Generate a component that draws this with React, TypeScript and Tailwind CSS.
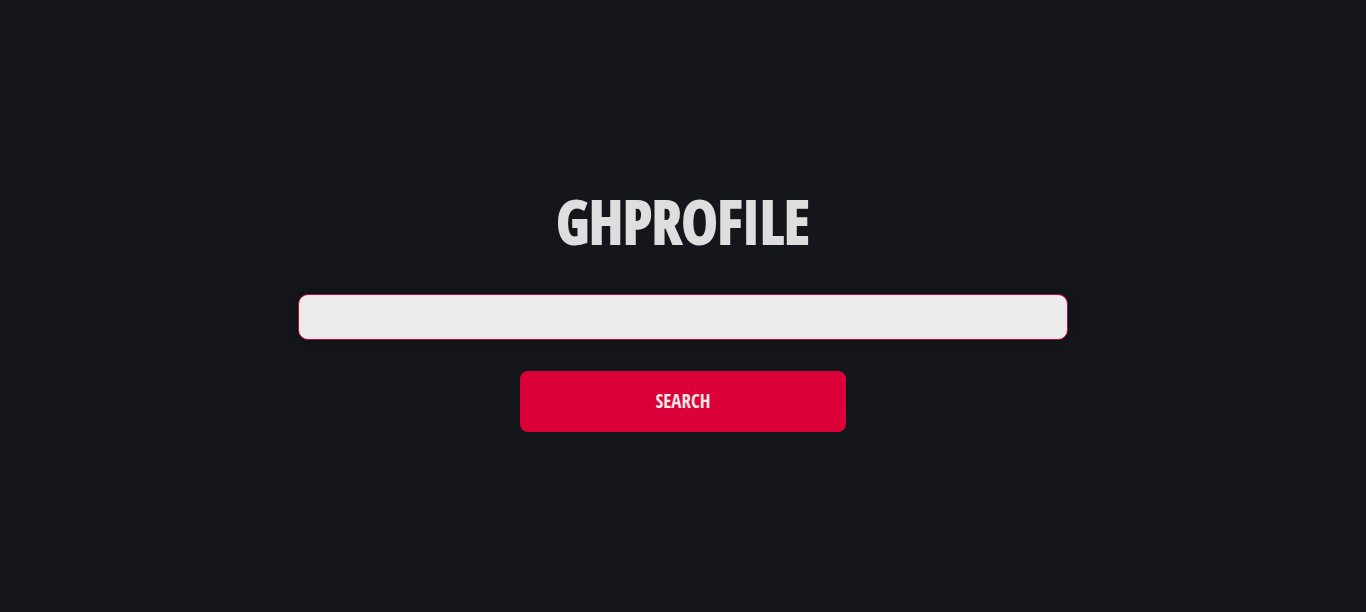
import { useState } from "react";

export default function App() {
  const [username, setUsername] = useState("");

  return (
    <main className="flex min-h-screen flex-col items-center justify-center bg-[#14161b] px-6 font-['Open_Sans_Condensed','Roboto_Condensed',Roboto,sans-serif]">
      <form
        className="flex w-full max-w-[770px] flex-col items-center gap-[31px]"
        onSubmit={(event) => event.preventDefault()}
      >
        <h1 className="text-6xl leading-[83px] font-bold text-[#dedede] [-webkit-text-stroke:2px_#dedede]">
          GHPROFILE
        </h1>
        <input
          type="text"
          aria-label="GitHub username"
          value={username}
          onChange={(event) => setUsername(event.target.value)}
          className="h-[46px] w-full rounded-[10px] border border-[#c40a45] bg-[#ececec] px-4 text-xl text-[#14161b] shadow-[0_0_8px_rgba(0,0,0,0.4)] outline-none"
        />
        <button
          type="submit"
          className="h-[61px] w-full max-w-[326px] cursor-pointer rounded-lg bg-[#db0037] text-[19px] font-bold text-[#f5e6e6]"
        >
          SEARCH
        </button>
      </form>
    </main>
  );
}
